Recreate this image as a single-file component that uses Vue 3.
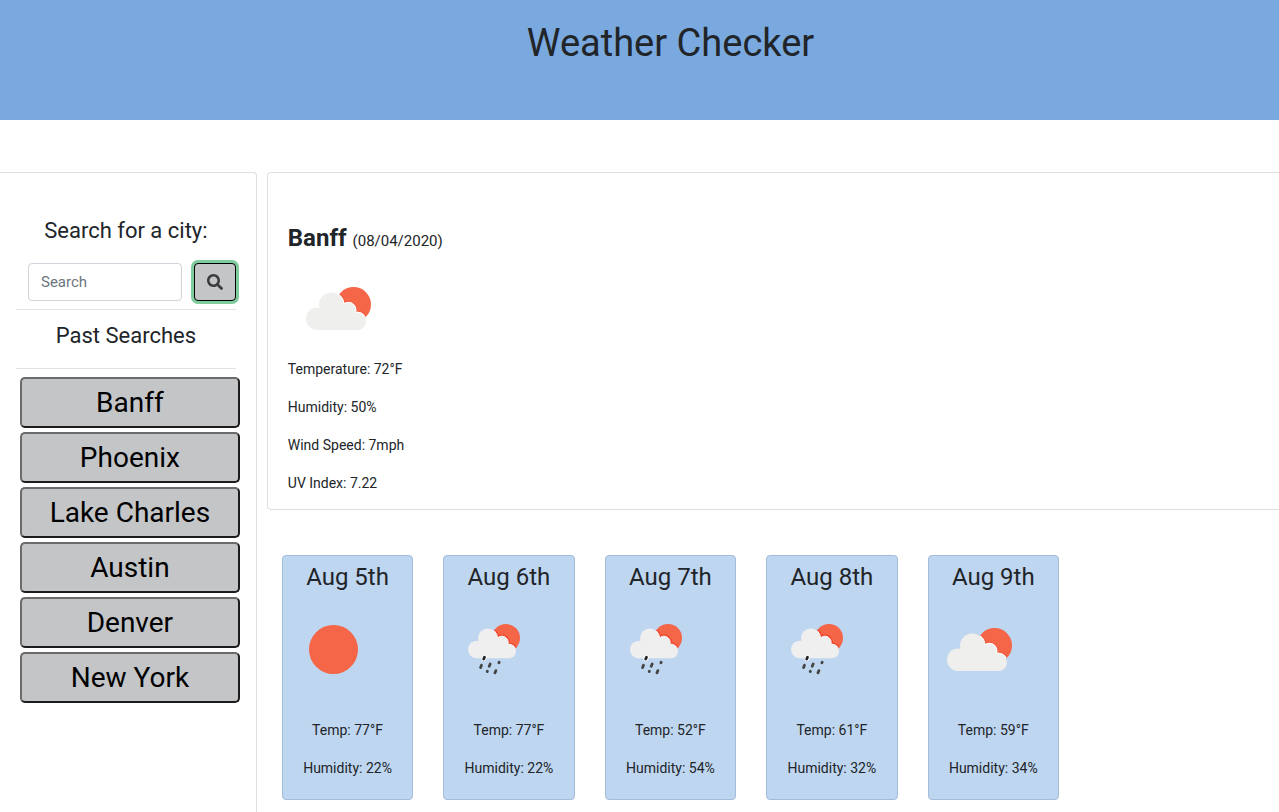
<script setup>
import { ref } from 'vue'

const query = ref('')
const cities = ['Banff', 'Phoenix', 'Lake Charles', 'Austin', 'Denver', 'New York']
const current = ['Temperature: 72°F', 'Humidity: 50%', 'Wind Speed: 7mph', 'UV Index: 7.22']
const forecast = [
  { day: 'Aug 5th', icon: 'sun', temp: 77, humidity: 22 },
  { day: 'Aug 6th', icon: 'rain', temp: 77, humidity: 22 },
  { day: 'Aug 7th', icon: 'rain', temp: 52, humidity: 54 },
  { day: 'Aug 8th', icon: 'rain', temp: 61, humidity: 32 },
  { day: 'Aug 9th', icon: 'cloud', temp: 59, humidity: 34 },
]
</script>

<template>
  <div class="page">
    <svg class="defs" aria-hidden="true">
      <defs>
        <clipPath id="cloud-sun-clip"><circle cx="65.5" cy="45.5" r="17.5" /></clipPath>
        <clipPath id="rain-sun-clip"><circle cx="62" cy="38" r="14" /></clipPath>
        <g id="cloud-shape">
          <circle cx="29.3" cy="59.7" r="11.3" />
          <circle cx="43.3" cy="45.8" r="12.3" />
          <circle cx="60.4" cy="51" r="7.2" />
          <circle cx="69.3" cy="62.3" r="8.7" />
          <path d="M29 52 43 46l17 5 9 11v9H29z" />
        </g>
        <g id="rain-cloud-shape">
          <circle cx="32.8" cy="49.5" r="8.8" />
          <circle cx="43.8" cy="38.2" r="9.8" />
          <circle cx="57.9" cy="42.4" r="6.3" />
          <circle cx="64.9" cy="51.2" r="7.1" />
          <path d="M32 44 44 38l14 4 7 9v7.3H32.8z" />
        </g>
        <symbol id="sun" viewBox="0 0 100 100">
          <circle cx="50.5" cy="49.5" r="24.5" fill="#f56547" />
        </symbol>
        <symbol id="cloud" viewBox="0 0 100 100">
          <circle cx="65.5" cy="45.5" r="17.5" fill="#f56547" />
          <g clip-path="url(#cloud-sun-clip)">
            <use href="#cloud-shape" fill="none" stroke="#ee4026" stroke-width="3" />
            <use href="#cloud-shape" fill="none" stroke="#fff" stroke-width="2" />
          </g>
          <use href="#cloud-shape" fill="#efefed" />
        </symbol>
        <symbol id="rain" viewBox="0 0 100 100">
          <circle cx="62" cy="38" r="14" fill="#f56547" />
          <g clip-path="url(#rain-sun-clip)">
            <use href="#rain-cloud-shape" fill="none" stroke="#ee3a22" stroke-width="3" />
            <use href="#rain-cloud-shape" fill="none" stroke="#fff" stroke-width="1" />
          </g>
          <use href="#rain-cloud-shape" fill="#efefef" />
          <g fill="none" stroke-linecap="round">
            <path d="M40.5 57.2 39.7 59" stroke="#fff" stroke-width="4.6" />
            <path d="M40.5 57.2 39.7 59" stroke="#222" stroke-width="2.8" />
            <path
              d="M37.5 65.3 36.6 67.6M46.2 64 45.2 66.3M55.2 62.2 54.9 62.8M43.4 71.2 43.2 71.6M51.9 70.6 50.9 72.8"
              stroke="#444" stroke-width="2.8"
            />
          </g>
        </symbol>
      </defs>
    </svg>

    <header class="banner"><h1>Weather Checker</h1></header>

    <div class="layout">
      <aside class="sidebar">
        <label class="side-title" for="city">Search for a city:</label>
        <form class="search" @submit.prevent>
          <input id="city" v-model="query" type="text" placeholder="Search" />
          <button type="submit" aria-label="Search">
            <svg width="16" height="16" viewBox="0 0 512 512" aria-hidden="true">
              <path fill="#383b40" d="M505 442.7L405.3 343c-4.500-4.500-10.600-7-17-7H372c27.600-35.300 44-79.700 44-128C416 93.100 322.900 0 208 0S0 93.100 0 208s93.100 208 208 208c48.300 0 92.700-16.400 128-44v16.300c0 6.400 2.500 12.500 7 17l99.700 99.700c9.400 9.400 24.600 9.400 33.900 0l28.300-28.300c9.400-9.400 9.400-24.600.1-34zM208 336c-70.700 0-128-57.200-128-128 0-70.700 57.200-128 128-128 70.700 0 128 57.200 128 128 0 70.700-57.200 128-128 128z" />
            </svg>
          </button>
        </form>
        <hr />
        <h2 class="side-title past">Past Searches</h2>
        <hr />
        <div class="cities">
          <button v-for="city in cities" :key="city" type="button">{{ city }}</button>
        </div>
      </aside>

      <main>
        <section class="current">
          <h2>Banff <small>(08/04/2020)</small></h2>
          <svg class="weather" role="img" aria-label="Partly cloudy"><use href="#cloud" /></svg>
          <p v-for="line in current" :key="line">{{ line }}</p>
        </section>
        <section class="forecast">
          <article v-for="f in forecast" :key="f.day">
            <h3>{{ f.day }}</h3>
            <svg class="weather" role="img" :aria-label="f.icon"><use :href="'#' + f.icon" /></svg>
            <p>Temp: {{ f.temp }}°F</p>
            <p>Humidity: {{ f.humidity }}%</p>
          </article>
        </section>
      </main>
    </div>
  </div>
</template>

<style>
body {
  margin: 0;
  background: #fff;
}
</style>

<style scoped>
* {
  box-sizing: border-box;
}
.page {
  display: flex;
  flex-direction: column;
  min-height: 100vh;
  font: 15px/24px Roboto, "Liberation Sans", sans-serif;
  color: #212529;
}
h1, h2, h3, p {
  margin: 0;
  font-weight: 400;
}
p {
  font-size: 14px;
}
.defs {
  position: absolute;
  width: 0;
  height: 0;
}
.banner {
  height: 120px;
  padding: 19px 0 0 62px;
  background: #79a9df;
  text-align: center;
}
h1 {
  font-size: 38px;
  line-height: 48px;
}
.layout {
  flex: 1;
  display: grid;
  grid-template-columns: calc(20% + 1px) minmax(0, 1fr);
  column-gap: 10px;
  margin-top: 52px;
}
.sidebar {
  padding: 44px 20px 0 16px;
  border: 1px solid #dfdfdf;
  border-width: 1px 1px 0 0;
  border-radius: 0 4px 0 0;
}
.side-title {
  display: block;
  font-size: 22px;
  line-height: 28px;
  text-align: center;
}
.search {
  display: flex;
  gap: 12px;
  margin: 18px 0 8px 12px;
}
.search input {
  flex: 1;
  min-width: 0;
  height: 38px;
  padding: 0 12px;
  border: 1px solid #ced4da;
  border-radius: 4px;
  font: inherit;
  color: #495057;
  background: #fff;
}
.search input::placeholder {
  color: #6c757d;
  opacity: 1;
}
.search button {
  display: grid;
  place-items: center;
  width: 42px;
  height: 38px;
  padding: 0;
  border: 1px solid #000;
  border-radius: 4px;
  background: #c4c5c7;
  box-shadow: 0 0 0 3px #7ecb9b;
}
hr {
  height: 1px;
  margin: 0;
  border: 0;
  background: #e3e3e3;
}
.past {
  margin: 12px 0 18px;
}
.cities {
  display: grid;
  gap: 4px;
  margin: 8px -4px 0 4px;
}
.cities button {
  height: 51px;
  padding: 0;
  border: 2px solid;
  border-color: #6b6b6b #1c1c1c #1c1c1c #6b6b6b;
  border-radius: 5px;
  background: #c4c5c7;
  font: 28px/45px Roboto, "Liberation Sans", sans-serif;
  color: #000;
}
.current {
  padding: 50px 20px 14px;
  border: 1px solid #dfdfdf;
  border-right: 0;
  border-radius: 4px 0 0 4px;
}
.current h2 {
  font-size: 24px;
  font-weight: 700;
  line-height: 30px;
}
.current small {
  font-size: 15px;
  font-weight: 400;
}
.weather {
  display: block;
  width: 100px;
  height: 100px;
}
.current .weather {
  margin: 3px 0 -2px;
}
p + p {
  margin-top: 14px;
}
.forecast {
  display: grid;
  grid-template-columns: repeat(5, minmax(0, 1fr));
  gap: 30px;
  padding: 45px 220px 12px 15px;
}
.forecast article {
  padding: 6px 0 19px;
  border: 1px solid #a3bcd8;
  border-radius: 4px;
  background: #bfd6f0;
  text-align: center;
}
.forecast h3 {
  font-size: 24px;
  line-height: 30px;
}
.forecast .weather {
  margin: 8px 0 18px;
}
</style>
